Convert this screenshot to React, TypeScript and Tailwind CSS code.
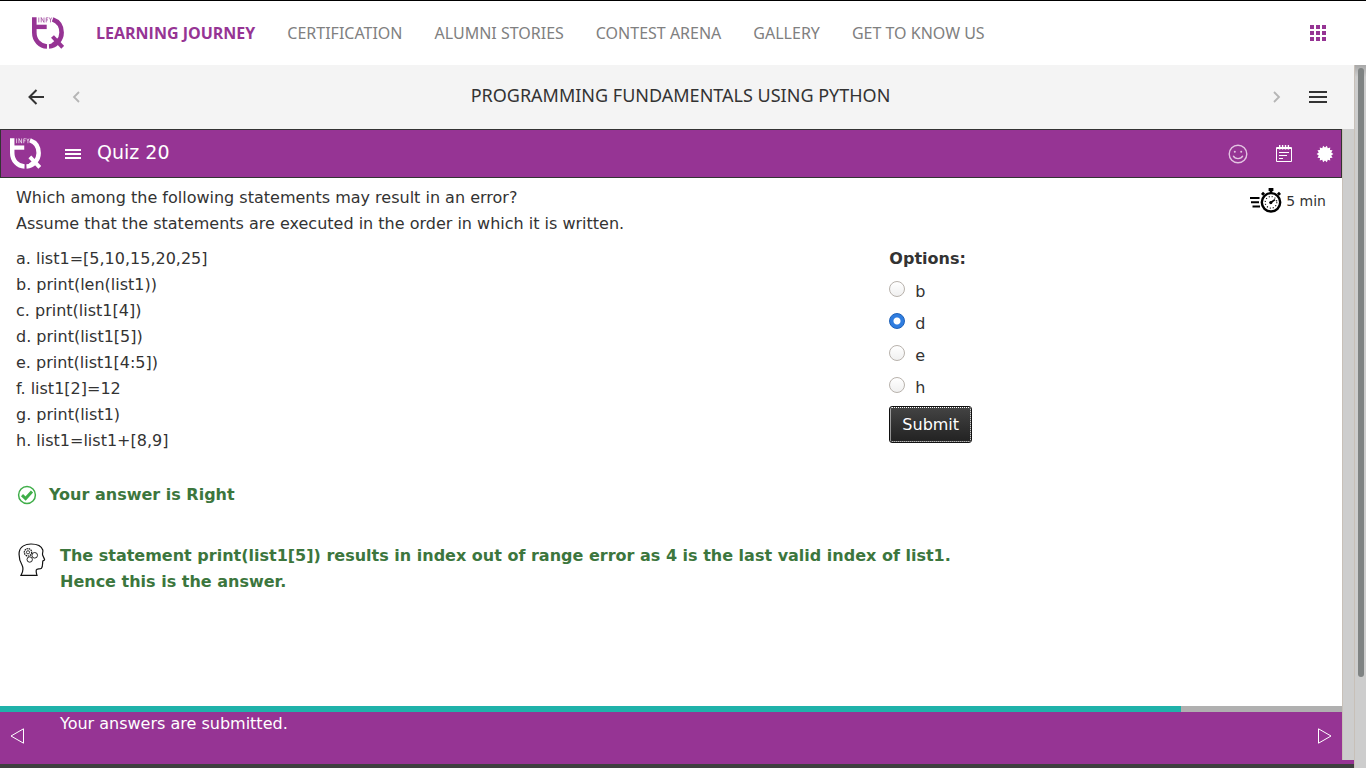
import { useState } from 'react';

const links = ['CERTIFICATION', 'ALUMNI STORIES', 'CONTEST ARENA', 'GALLERY', 'GET TO KNOW US'];

const statements = [
  'a. list1=[5,10,15,20,25]',
  'b. print(len(list1))',
  'c. print(list1[4])',
  'd. print(list1[5])',
  'e. print(list1[4:5])',
  'f. list1[2]=12',
  'g. print(list1)',
  'h. list1=list1+[8,9]',
];

const options = ['b', 'd', 'e', 'h'];

const scallop = Array.from({ length: 28 }, (_, i) => {
  const r = i % 2 === 0 ? 8.4 : 6.4;
  const a = (i * Math.PI) / 14;
  return `${(9 + r * Math.cos(a)).toFixed(2)},${(9 + r * Math.sin(a)).toFixed(2)}`;
}).join(' ');

function Logo({ className }: { className: string }) {
  return (
    <svg viewBox="0 0 32 32" className={className} fill="none" stroke="currentColor" aria-hidden="true">
      <path d="M2.3 0.3V15.5C2.3 23.5 8 29.2 15 29.5" strokeWidth="4.6" />
      <path d="M2 9.9H14.7" strokeWidth="4.4" />
      <path d="M20.6 2.3C26.2 4.3 29.6 9.3 29.6 15.5C29.6 19.3 28.4 22.2 26 24.8C23.4 27.8 20.5 29.3 17 29.5" strokeWidth="4.6" />
      <path d="M20.5 19.5L30.7 30.3" strokeWidth="4" />
      <path d="M29 21.2L20.6 27.6" strokeWidth="3.4" />
      <path d="M6.8 0.5V5.4M9.2 5.4V0.5L12 5.4V0.5M14.2 5.4V0.8H16.3M14.2 2.9H16M17.3 0.5L18.5 2.9L19.7 0.5M18.5 2.9V5.4" strokeWidth="0.7" />
    </svg>
  );
}

function Chevron({ right = false }: { right?: boolean }) {
  return (
    <svg viewBox="0 0 8 12" className="h-3 w-2" fill="none" stroke="#b5b5b5" strokeWidth="1.8" aria-hidden="true">
      <path d={right ? 'M1 1L6 6L1 11' : 'M7 1L2 6L7 11'} />
    </svg>
  );
}

function Smiley() {
  return (
    <svg viewBox="0 0 20 20" className="size-5" fill="none" stroke="#e3c4e2" strokeWidth="1.4" aria-hidden="true">
      <circle cx="10" cy="10" r="8.8" />
      <path d="M5.2 11.8C7 15.6 13 15.6 14.8 11.8" />
      <circle cx="6.8" cy="7.8" r="1" fill="#e3c4e2" stroke="none" />
      <circle cx="13.2" cy="7.8" r="1" fill="#e3c4e2" stroke="none" />
    </svg>
  );
}

function Notes() {
  return (
    <svg viewBox="0 0 16 17" className="h-[17px] w-4" fill="none" stroke="#fff" aria-hidden="true">
      <path d="M0.5 2.5H15.5V16.5H0.5Z" />
      <path d="M1 3.5H15" />
      <path d="M3.7 0V4.5M6.6 0V4.5M9.5 0V4.5M12.4 0V4.5" strokeWidth="1.4" />
      <path d="M3 7.5H13M3 10.5H11M3 13.5H7" />
    </svg>
  );
}

function Stopwatch() {
  return (
    <svg viewBox="0 0 32 25" className="h-[25px] w-8" fill="none" stroke="#000" aria-hidden="true">
      <path d="M0 10H9.5M1 14.2H9M2.5 18.4H10" strokeWidth="2" />
      <circle cx="21" cy="14.3" r="9.2" strokeWidth="2.4" />
      <path d="M18.6 1.5H23.4" strokeWidth="3" />
      <path d="M21 1.5V5" strokeWidth="2.6" />
      <path d="M12 4.9L14 6.7M30 4.9L28 6.7" strokeWidth="3" />
      <circle cx="21" cy="14.3" r="5.8" strokeWidth="1.2" strokeDasharray="1 2.04" />
      <path d="M20.5 14.8L25 11.6" strokeWidth="1.7" />
      <circle cx="20.8" cy="14.6" r="1.6" fill="#000" stroke="none" />
    </svg>
  );
}

function CheckBadge() {
  return (
    <svg viewBox="0 0 20 20" className="size-5" fill="none" stroke="#3fae49" aria-hidden="true">
      <circle cx="10" cy="10" r="8.4" strokeWidth="1.5" />
      <path d="M5 10.2L8.6 13.6L15 6.6" strokeWidth="3" />
    </svg>
  );
}

function ThinkingHead() {
  return (
    <svg viewBox="0 0 28 34" className="h-[34px] w-7 shrink-0" fill="none" stroke="#111" strokeWidth="1.2" aria-hidden="true">
      <path d="M3 32.4C5.5 28 5.5 25 4 22C1.2 17.5 0.8 13 1.2 9C2.2 3.5 7.5 1 13 1C18.5 1 23.5 2.8 24.8 7C25.2 9 24.2 10 24.6 12L26.6 16.5C26.6 17.5 25.2 17.5 24.8 18C24.4 20 25 23.5 23.5 25.2C21.8 26.5 19 25.3 18.3 27C18 28.5 18.3 30.5 19 32.4Z" />
      <circle cx="10" cy="9.3" r="3.7" strokeDasharray="1.5 0.7" />
      <circle cx="10" cy="9.3" r="1.6" strokeWidth="0.8" />
      <circle cx="16.7" cy="12.3" r="2.8" strokeWidth="0.9" />
      <circle cx="11.7" cy="16.5" r="2.7" strokeWidth="0.9" />
    </svg>
  );
}

function Triangle({ right = false }: { right?: boolean }) {
  return (
    <svg viewBox="0 0 14 16" className="h-4 w-3.5" fill="none" stroke="#fff" aria-hidden="true">
      <path d={right ? 'M0.5 0.8L13 8L0.5 15.2Z' : 'M13.5 0.8L1 8L13.5 15.2Z'} />
    </svg>
  );
}

function Bars({ className, bar }: { className: string; bar: string }) {
  return (
    <span className={`flex flex-col ${className}`}>
      <span className={bar} />
      <span className={bar} />
      <span className={bar} />
    </span>
  );
}

export default function App() {
  const [answer, setAnswer] = useState('d');

  return (
    <div className="flex h-screen flex-col overflow-hidden border-t border-black bg-white font-['DejaVu_Sans',sans-serif] text-base text-[#333]">
      <header className="flex h-16 shrink-0 items-center justify-between pr-10 pl-8">
        <nav className="flex items-center gap-8 font-['Noto_Sans',sans-serif] text-[#808080]">
          <a href="#home" aria-label="Home" className="text-[#963494]">
            <Logo className="size-8" />
          </a>
          <a href="#journey" className="font-['Open_Sans',sans-serif] font-bold text-[#963494]">LEARNING JOURNEY</a>
          {links.map((text) => (
            <a key={text} href="#top">{text}</a>
          ))}
        </nav>
        <button type="button" aria-label="Apps" className="grid grid-cols-3 gap-0.5">
          {Array.from({ length: 9 }, (_, i) => (
            <span key={i} className="size-1 bg-[#963494]" />
          ))}
        </button>
      </header>

      <div className="flex min-h-0 flex-1">
        <div className="flex min-w-0 flex-1 flex-col">
          <div className="flex h-16 shrink-0 items-center justify-between bg-[#f4f4f4] pr-[27px] pl-7">
            <div className="flex items-center gap-7">
              <button type="button" aria-label="Back">
                <svg viewBox="0 0 16 16" className="size-4" fill="none" stroke="#333" strokeWidth="2" aria-hidden="true">
                  <path d="M16 8H1.5M8.5 1L1.5 8L8.5 15" />
                </svg>
              </button>
              <button type="button" aria-label="Previous"><Chevron /></button>
            </div>
            <h1 className="pb-1 pl-2 font-['Noto_Sans',sans-serif] text-lg">PROGRAMMING FUNDAMENTALS USING PYTHON</h1>
            <div className="flex items-center gap-7">
              <button type="button" aria-label="Next"><Chevron right /></button>
              <button type="button" aria-label="Contents">
                <Bars className="gap-[3px]" bar="h-0.5 w-[18px] bg-[#333]" />
              </button>
            </div>
          </div>

          <div className="flex min-h-0 flex-1 bg-[#963494] pb-1">
            <div className="flex min-w-0 flex-1 flex-col bg-white">
              <div className="flex h-[49px] shrink-0 items-center justify-between border border-[#333] bg-[#963494] pr-[7px] pl-[9px] text-white">
                <div className="flex items-center">
                  <Logo className="size-[31px]" />
                  <button type="button" aria-label="Menu" className="mx-6">
                    <Bars className="gap-0.5" bar="h-0.5 w-4 bg-white" />
                  </button>
                  <h2 className="-ml-2 pb-0.5 text-[19px]">Quiz 20</h2>
                </div>
                <div className="flex items-center gap-6">
                  <div className="flex items-center gap-7">
                    <button type="button" aria-label="Feedback"><Smiley /></button>
                    <button type="button" aria-label="Notes"><Notes /></button>
                  </div>
                  <button type="button" aria-label="Highlights">
                    <svg viewBox="0 0 18 18" className="size-[18px]" fill="#fff" aria-hidden="true">
                      <polygon points={scallop} />
                    </svg>
                  </button>
                </div>
              </div>

              <main className="min-h-0 flex-1 overflow-hidden px-4 pt-[7px] leading-[26px]">
                <div className="flex items-start justify-between">
                  <p>
                    Which among the following statements may result in an error?
                    <br />
                    Assume that the statements are executed in the order in which it is written.
                  </p>
                  <div className="mt-[3px] flex items-center gap-1 text-sm">
                    <Stopwatch />
                    5 min
                  </div>
                </div>

                <div className="mt-[9px] grid grid-cols-3">
                  <div className="col-span-2">
                    {statements.map((line) => (
                      <p key={line}>{line}</p>
                    ))}
                  </div>
                  <form onSubmit={(e) => e.preventDefault()}>
                    <fieldset>
                      <legend className="mb-1 font-bold">Options:</legend>
                      {options.map((o) => (
                        <label key={o} className="flex h-8 items-start gap-2.5 leading-8">
                          <input
                            type="radio"
                            name="answer"
                            value={o}
                            checked={answer === o}
                            onChange={() => setAnswer(o)}
                            className="mt-[5px] size-4 appearance-none rounded-full border border-[#b8b2ac] bg-linear-to-b from-white to-[#f0f0f0] checked:border-[#1b5fb8] checked:bg-[radial-gradient(circle,#fff_0,#fff_3px,#2f7de0_4px)]"
                          />
                          {o}
                        </label>
                      ))}
                    </fieldset>
                    <button
                      type="submit"
                      className="mt-0.5 h-[37px] rounded-[3px] border border-[#111] bg-linear-to-b from-[#444] to-[#222] px-3 text-white outline-1 -outline-offset-2 outline-white outline-dotted"
                    >
                      Submit
                    </button>
                  </form>
                </div>

                <div className="mt-7 flex items-center gap-3 pl-px font-bold text-[#3c763d]">
                  <CheckBadge />
                  Your answer is Right
                </div>
                <div className="mt-[35px] flex items-start gap-3.5 pl-0.5 font-bold text-[#3c763d]">
                  <ThinkingHead />
                  <p>
                    The statement print(list1[5]) results in index out of range error as 4 is the last valid index of list1.
                    <br />
                    Hence this is the answer.
                  </p>
                </div>
              </main>

              <div className="h-1.5 shrink-0 bg-[#b0b0b0]">
                <div className="h-full w-[88%] bg-[#20b2aa]" />
              </div>
              <footer className="flex h-12 shrink-0 items-center bg-[#963494] px-2.5 text-white">
                <button type="button" aria-label="Previous page"><Triangle /></button>
                <p className="flex-1 self-start pl-9">Your answers are submitted.</p>
                <button type="button" aria-label="Next page"><Triangle right /></button>
              </footer>
            </div>
            <div className="w-3 border-l border-[#c8c0b8] bg-[#cdcdcd]" />
          </div>
          <div className="h-1 shrink-0 bg-[#3f3f3f]" />
        </div>

        <div className="flex w-3 justify-center border-l border-[#c8c0b8] bg-[#cdcdcd] bg-linear-to-b from-[#a8a8a8] to-[#cdcdcd] to-[12px] pt-[3px]">
          <div className="h-[87%] w-1.5 rounded-full bg-[#7f8383]" />
        </div>
      </div>
    </div>
  );
}
